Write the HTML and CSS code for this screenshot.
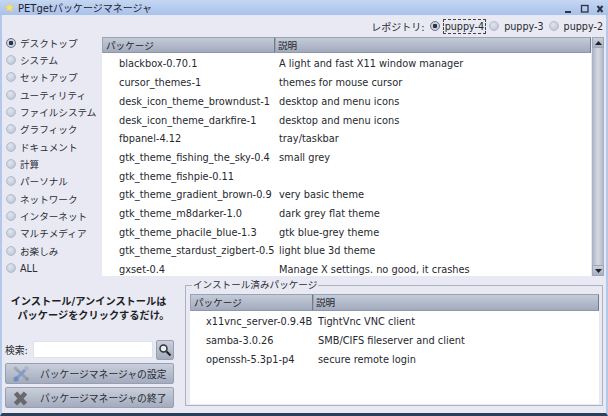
FILE: index.html
```html
<!DOCTYPE html>
<html lang="ja">
<head>
<meta charset="utf-8">
<title>PETget</title>
<link rel="stylesheet" href="styles.css">
</head>
<body>
<div class="window">
  <header class="titlebar">
    <svg class="star" viewBox="0 0 12 12" width="11" height="11"><path d="M6 1l1.6 3.3 3.6.5-2.6 2.5.6 3.6L6 8.7l-3.2 1.7.6-3.6L.8 4.8l3.6-.5z" fill="#f6e07c" stroke="#dcc66a" stroke-width=".5"/></svg>
    <span class="title">PETgetパッケージマネージャ</span>
    <div class="winbtns">
      <svg viewBox="0 0 10 10" width="10" height="10"><rect x="2" y="7" width="6" height="2" fill="#2a3348"/></svg>
      <svg viewBox="0 0 10 10" width="10" height="10"><rect x="2.5" y="1.5" width="6.5" height="6.5" fill="none" stroke="#2a3348" stroke-width="1.3"/></svg>
      <svg viewBox="0 0 10 10" width="10" height="10"><path d="M2.5 2l5 6M7.5 2l-5 6" stroke="#2a3348" stroke-width="2"/></svg>
    </div>
  </header>
  <div class="body">
    <div class="repos">
      <span class="repolabel">レポジトリ:</span>
      <span class="radio on"></span><span class="repo focus">puppy-4</span>
      <span class="radio"></span><span class="repo">puppy-3</span>
      <span class="radio"></span><span class="repo">puppy-2</span>
    </div>
    <div class="upper">
      <ul class="cats">
        <li><span class="radio on"></span>デスクトップ</li>
        <li><span class="radio"></span>システム</li>
        <li><span class="radio"></span>セットアップ</li>
        <li><span class="radio"></span>ユーティリティ</li>
        <li><span class="radio"></span>ファイルシステム</li>
        <li><span class="radio"></span>グラフィック</li>
        <li><span class="radio"></span>ドキュメント</li>
        <li><span class="radio"></span>計算</li>
        <li><span class="radio"></span>パーソナル</li>
        <li><span class="radio"></span>ネットワーク</li>
        <li><span class="radio"></span>インターネット</li>
        <li><span class="radio"></span>マルチメディア</li>
        <li><span class="radio"></span>お楽しみ</li>
        <li><span class="radio"></span>ALL</li>
      </ul>
      <div class="list main-list">
        <div class="head"><div class="hcell c1">パッケージ</div><div class="hcell grow">説明</div></div>
        <div class="rows">
        <div class="row"><span class="c1">blackbox-0.70.1</span><span>A light and fast X11 window manager</span></div>
        <div class="row"><span class="c1">cursor_themes-1</span><span>themes for mouse cursor</span></div>
        <div class="row"><span class="c1">desk_icon_theme_browndust-1</span><span>desktop and menu icons</span></div>
        <div class="row"><span class="c1">desk_icon_theme_darkfire-1</span><span>desktop and menu icons</span></div>
        <div class="row"><span class="c1">fbpanel-4.12</span><span>tray/taskbar</span></div>
        <div class="row"><span class="c1">gtk_theme_fishing_the_sky-0.4</span><span>small grey</span></div>
        <div class="row"><span class="c1">gtk_theme_fishpie-0.11</span><span></span></div>
        <div class="row"><span class="c1">gtk_theme_gradient_brown-0.9</span><span>very basic theme</span></div>
        <div class="row"><span class="c1">gtk_theme_m8darker-1.0</span><span>dark grey flat theme</span></div>
        <div class="row"><span class="c1">gtk_theme_phacile_blue-1.3</span><span>gtk blue-grey theme</span></div>
        <div class="row"><span class="c1">gtk_theme_stardust_zigbert-0.5</span><span>light blue 3d theme</span></div>
        <div class="row"><span class="c1">gxset-0.4</span><span>Manage X settings. no good, it crashes</span></div>
        </div>
      </div>
      <div class="scrollbar">
        <div class="arrow"><svg viewBox="0 0 7 4" width="7" height="4"><path d="M0 4h7L3.5 0z" fill="#222"/></svg></div>
        <div class="track"></div>
        <div class="arrow"><svg viewBox="0 0 7 4" width="7" height="4"><path d="M0 0h7L3.5 4z" fill="#222"/></svg></div>
      </div>
    </div>
    <div class="lower">
      <div class="side">
        <p class="hint">インストール/アンインストールは<br><span class="hint2">パッケージをクリックするだけ。</span></p>
        <div class="search">
          <span class="searchlabel">検索:</span>
          <div class="input"></div>
          <div class="sbtn"><svg viewBox="0 0 14 14" width="14" height="14"><circle cx="5.5" cy="5.5" r="3.5" fill="#e8eef6" stroke="#333" stroke-width="1.5"/><path d="M8.5 8.5l4 4" stroke="#222" stroke-width="2.2"/></svg></div>
        </div>
        <div class="btn">
          <svg viewBox="0 0 22 18" width="22" height="18"><path d="M4 4l11 10" stroke="#98a0ac" stroke-width="3"/><path d="M14 4L5 13" stroke="#7f9ccf" stroke-width="3"/><circle cx="4" cy="14" r="2.6" fill="#6c8cc8"/><circle cx="14.5" cy="3.5" r="2.4" fill="#b2b8c0"/><circle cx="15" cy="14" r="1.8" fill="#8a92a0"/><circle cx="3.5" cy="3.5" r="2" fill="#a6acb5"/></svg>
          <span>パッケージマネージャの設定</span>
        </div>
        <div class="btn">
          <svg viewBox="0 0 22 18" width="22" height="18"><path d="M3.5 4l10 11M13.5 4l-10 11" stroke="#67696c" stroke-width="4.6"/></svg>
          <span>パッケージマネージャの終了</span>
        </div>
      </div>
      <fieldset class="installed">
        <legend>インストール済みパッケージ</legend>
        <div class="list">
          <div class="head tall"><div class="hcell c2">パッケージ</div><div class="hcell grow">説明</div></div>
          <div class="rows">
          <div class="row"><span class="c2">x11vnc_server-0.9.4B</span><span>TightVnc VNC client</span></div>
          <div class="row"><span class="c2">samba-3.0.26</span><span>SMB/CIFS fileserver and client</span></div>
          <div class="row"><span class="c2">openssh-5.3p1-p4</span><span>secure remote login</span></div>
          </div>
        </div>
      </fieldset>
    </div>
  </div>
</div>
</body>
</html>
```
FILE: styles.css
```css
* { box-sizing: border-box; }
html, body { margin: 0; padding: 0; }
body {
  width: 608px;
  height: 416px;
  overflow: hidden;
  font-family: "DejaVu Sans", "Noto Sans CJK JP", sans-serif;
  font-size: 9.6px;
  color: #26282e;
  background: #e8e9f2;
}
.window { display: flex; flex-direction: column; height: 416px; }
.titlebar {
  height: 15px;
  display: flex;
  align-items: center;
  padding: 0 2px 0 4px;
  background: linear-gradient(#c4d6f2, #a9c2ea);
  flex: none;
}
.star { margin-right: 3px; }
.title { flex: 1; font-size: 10px; color: #1d2230; }
.winbtns { display: flex; gap: 6px; margin-right: 1px; padding-top: 2px; }
.body {
  flex: 1;
  display: flex;
  flex-direction: column;
  min-height: 0;
  border-left: 2px solid #b4c8ea;
  border-right: 2px solid #b4c8ea;
  border-bottom: 3px solid #2c3f58;
}
.repos {
  height: 22px;
  flex: none;
  display: flex;
  align-items: center;
  justify-content: flex-end;
  padding-right: 1px;
}
.repolabel { margin-right: 5px; font-size: 10px; }
.repo { padding: 1px; margin-right: 3px; font-size: 9.6px; border: 1px solid transparent; }
.repo:last-child { margin-right: 0; }
.repo.focus { border: 1px dashed #444; }
.radio {
  width: 10px;
  height: 10px;
  border-radius: 50%;
  background: radial-gradient(circle at 40% 35%, #e2e6f0, #b4bdd0);
  border: 1px solid #b5bccb;
  display: inline-block;
  flex: none;
  margin-right: 3px;
}
.radio.on {
  background: radial-gradient(circle, #2c3240 0 2px, #c8d0e0 2.5px);
  border-color: #68738a;
}
.upper { display: flex; height: 239px; flex: none; }
.cats { list-style: none; margin: -3px 0 0; padding: 0 0 0 4px; width: 100px; flex: none; }
.cats li { height: 17.35px; display: flex; align-items: center; white-space: nowrap; color: #2b2d36; }
.cats .radio { margin-right: 4px; }
.list { background: #fff; display: flex; flex-direction: column; }
.main-list { flex: 1; }
.head { display: flex; height: 16px; flex: none; }
.head.tall { height: 17px; }
.hcell {
  height: 100%;
  padding-left: 3px;
  line-height: 15px;
  background: linear-gradient(#c4cbd8, #a2abbd);
  border: 1px solid #9ba3b4;
  border-bottom-color: #8f97a9;
  border-right-color: #717a8e;
  color: #24262c;
}
.grow { flex: 1; padding-left: 2px; }
.c1 { width: 173px; flex: none; white-space: nowrap; }
.row .c1 { padding-left: 17px; }
.rows { padding-top: 1.6px; }
.row {
  height: 18.7px;
  display: flex;
  align-items: center;
  font-size: 9.8px;
  white-space: nowrap;
  overflow: hidden;
  flex: none;
}
.row span:last-child { padding-left: 4px; }
.scrollbar {
  width: 12px;
  margin: 0 2px 0 1px;
  display: flex;
  flex-direction: column;
  background: #d5d8e3;
  flex: none;
}
.arrow {
  height: 11px;
  display: flex;
  align-items: center;
  justify-content: center;
  background: linear-gradient(#c9cfdb, #a9b0c0);
  border: 1px solid #a0a7b8;
  flex: none;
}
.track { flex: 1; background: linear-gradient(90deg, #a9b1c2, #d6dae4 50%, #aab2c3); }
.lower { flex: 1; display: flex; min-height: 0; }
.side { width: 183px; flex: none; display: flex; flex-direction: column; padding: 19px 0 0 3px; }
.hint {
  margin: 0 0 16px;
  font-weight: bold;
  font-size: 10.2px;
  line-height: 14px;
  text-align: center;
  width: 167px;
  color: #1d1f26;
  white-space: nowrap;
}
.hint2 { padding-left: 10px; }
.search { display: flex; align-items: center; height: 21px; }
.searchlabel { width: 28px; font-size: 9.8px; flex: none; white-space: nowrap; }
.input { width: 120px; height: 17px; background: #fff; border: 1px solid #dfe2ea; }
.sbtn {
  width: 18px;
  height: 20px;
  margin-left: 3px;
  display: flex;
  align-items: center;
  justify-content: center;
  background: linear-gradient(#c9cfdb, #a3abbd);
  border: 1px solid #989fb1;
  border-radius: 2px;
}
.btn {
  width: 169px;
  height: 21px;
  margin-top: 3px;
  display: flex;
  align-items: center;
  padding-left: 6px;
  background: linear-gradient(#c9cfdb, #a3abbd);
  border: 1px solid #989fb1;
  border-radius: 2px;
  flex: none;
}
.btn span { margin-left: 6px; font-size: 9.8px; color: #2b2d36; white-space: nowrap; }
.installed {
  flex: 1;
  margin: 3px 3px 7px 0;
  padding: 3px 3px 1px 4px;
  border: 1px solid #aeb2bf;
  min-width: 0;
  display: flex;
  flex-direction: column;
}
.installed legend { padding: 0 1px; margin-left: 2px; line-height: 12px; color: #2b2d36; }
.installed .list { flex: 1; }
.c2 { width: 123px; flex: none; white-space: nowrap; }
.row .c2 { padding-left: 16px; }
.row .c2 + span { padding-left: 5px; }
```
